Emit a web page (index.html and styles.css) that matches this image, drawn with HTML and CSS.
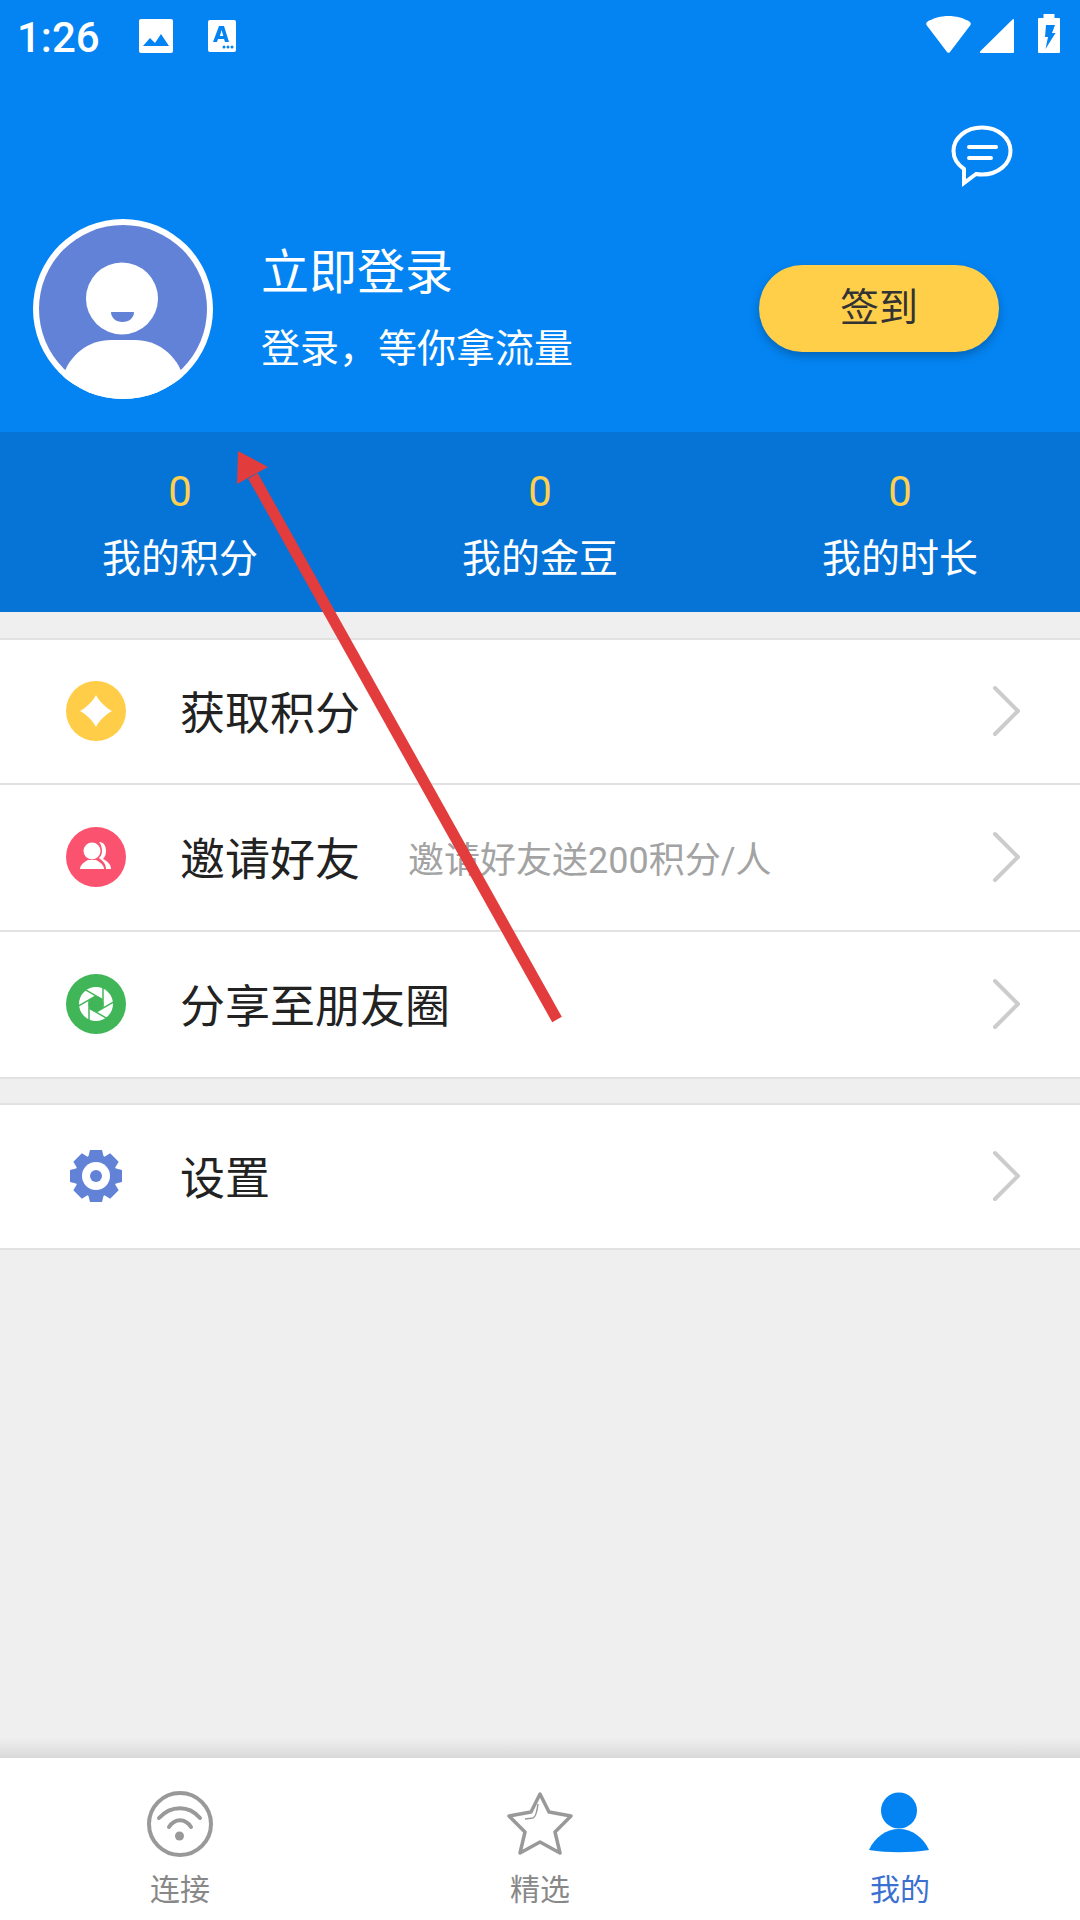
FILE: index.html
```html
<!DOCTYPE html>
<html lang="zh-CN">

<head>
  <meta charset="UTF-8">
  <meta name="viewport" content="width=device-width, initial-scale=1.0">
  <title>我的</title>
  <link rel="stylesheet" href="styles.css">
</head>

<body>
  <div class="app">
    <div class="profile-header">
      <div class="status-bar">
        <span class="status-time">1:26</span>
        <svg class="status-icon" width="36" height="36" viewBox="0 0 36 36">
          <path fill="#fff" d="M3 1h30a2 2 0 0 1 2 2v30a2 2 0 0 1-2 2H3a2 2 0 0 1-2-2V3a2 2 0 0 1 2-2z" />
          <path fill="#0484f2" d="M5 28l7-8 5 5 6-9 8 12z" />
        </svg>
        <svg class="status-icon" width="30" height="32" viewBox="0 0 30 32">
          <rect x="1" y="0" width="28" height="32" rx="2" fill="#fff" />
          <path fill="#0484f2" d="M12 6h5l5 16h-4l-1-3h-6l-1 3H6zm.9 10h3.400l-1.700-6z" />
          <circle cx="17" cy="27" r="1.500" fill="#0484f2" />
          <circle cx="21" cy="27" r="1.500" fill="#0484f2" />
          <circle cx="25" cy="27" r="1.500" fill="#0484f2" />
        </svg>
        <div class="status-right">
          <svg class="status-wifi" width="45" height="37" viewBox="0 0 45 37">
            <path fill="#fff" d="M1 6C7 2 15 0 22.500 0S38 2 44 6c1 1 1 2 .5 3L24 36a2 2 0 0 1-3 0L.5 9C0 8 0 7 1 6z" />
          </svg>
          <svg class="status-signal" width="34" height="34" viewBox="0 0 34 34">
            <path fill="#fff" d="M33 0a1 1 0 0 1 1 1v32a1 1 0 0 1-1 1H1a1 1 0 0 1-.7-1.700z" />
          </svg>
          <svg width="22" height="39" viewBox="0 0 22 39">
            <path fill="#fff" d="M5.500 0h11v4H21a1 1 0 0 1 1 1v33a1 1 0 0 1-1 1H1a1 1 0 0 1-1-1V5a1 1 0 0 1 1-1h4.500z" />
            <path fill="#0484f2" d="M8 11h9l-3 8h3.500L7.500 35l2.500-12H7z" />
          </svg>
        </div>
      </div>

      <div class="message-row">
        <svg width="62" height="62" viewBox="0 0 62 62" fill="none" stroke="#fff" stroke-width="4">
          <path d="M13 44C6 39 2.500 33 2.500 26 2.500 13 15 2.500 31 2.500S59.500 13 59.500 26 47 49.500 31 49.500c-2 0-4-.2-6-.5L13 58z" />
          <path d="M18 22h27M18 33h22" stroke-linecap="round" />
        </svg>
      </div>

      <div class="profile-row">
        <svg class="avatar" width="180" height="180" viewBox="0 0 180 180">
          <defs>
            <clipPath id="avatar-clip">
              <circle cx="90" cy="90" r="90" />
            </clipPath>
          </defs>
          <circle cx="90" cy="90" r="90" fill="#fff" />
          <circle cx="90" cy="90" r="84" fill="#6282d8" />
          <circle cx="89" cy="79.500" r="36" fill="#fff" />
          <path fill="#6282d8" d="M78 93h23c0 6-5 10-11.500 10S78 99 78 93z" />
          <path fill="#fff" clip-path="url(#avatar-clip)" d="M29 160c7-25 27-39 49-39h24c22 0 42 14 49 39v20H29z" />
        </svg>
        <div class="profile-text">
          <div class="profile-title">立即登录</div>
          <div class="profile-sub">登录，等你拿流量</div>
        </div>
        <div class="sign-btn">签到</div>
      </div>
    </div>

    <div class="stats">
      <div class="stat">
        <div class="stat-value">0</div>
        <div class="stat-label">我的积分</div>
      </div>
      <div class="stat">
        <div class="stat-value">0</div>
        <div class="stat-label">我的金豆</div>
      </div>
      <div class="stat">
        <div class="stat-value">0</div>
        <div class="stat-label">我的时长</div>
      </div>
    </div>

    <div class="menu-group menu-group-first">
      <div class="menu-row">
        <svg class="menu-icon" width="60" height="60" viewBox="0 0 60 60">
          <circle cx="30" cy="30" r="30" fill="#ffcd48" />
          <path fill="#fff" d="M30 14c3 6 9 12 16 16-7 4-13 10-16 16-3-6-9-12-16-16 7-4 13-10 16-16z" />
        </svg>
        <span class="menu-title">获取积分</span>
        <svg class="chevron" width="30" height="52" viewBox="0 0 30 52" fill="none" stroke="#ccc" stroke-width="4" stroke-linecap="round" stroke-linejoin="round">
          <path d="M3 3l23 23L3 49" />
        </svg>
      </div>
      <div class="menu-row">
        <svg class="menu-icon" width="60" height="60" viewBox="0 0 60 60">
          <circle cx="30" cy="30" r="30" fill="#fb5270" />
          <path fill="#fff" d="M33 15c5 0 7 4 7 9 0 3-1 6-3 8 4 2 8 5 8 10h-5c0-5-3-8-7-11 2-2 3-4 3-7 0-3-1-7-3-9z" />
          <circle cx="26" cy="24" r="8.500" fill="#fff" />
          <path fill="#fff" d="M14 42c0-4 4-7 8-9h8c4 2 8 5 8 9z" />
        </svg>
        <span class="menu-title">邀请好友</span>
        <span class="menu-note">邀请好友送200积分/人</span>
        <svg class="chevron" width="30" height="52" viewBox="0 0 30 52" fill="none" stroke="#ccc" stroke-width="4" stroke-linecap="round" stroke-linejoin="round">
          <path d="M3 3l23 23L3 49" />
        </svg>
      </div>
      <div class="menu-row">
        <svg class="menu-icon" width="60" height="60" viewBox="0 0 60 60">
          <circle cx="30" cy="30" r="30" fill="#41b658" />
          <circle cx="30" cy="30" r="17" fill="#fff" />
          <circle cx="30" cy="30" r="7.500" fill="#41b658" />
          <g stroke="#41b658" stroke-width="1.500">
            <path d="M37 34V13" />
            <path d="M37 34V13" transform="rotate(60 30 30)" />
            <path d="M37 34V13" transform="rotate(120 30 30)" />
            <path d="M37 34V13" transform="rotate(180 30 30)" />
            <path d="M37 34V13" transform="rotate(240 30 30)" />
            <path d="M37 34V13" transform="rotate(300 30 30)" />
          </g>
        </svg>
        <span class="menu-title">分享至朋友圈</span>
        <svg class="chevron" width="30" height="52" viewBox="0 0 30 52" fill="none" stroke="#ccc" stroke-width="4" stroke-linecap="round" stroke-linejoin="round">
          <path d="M3 3l23 23L3 49" />
        </svg>
      </div>
    </div>

    <div class="menu-group">
      <div class="menu-row">
        <svg class="menu-icon" width="60" height="60" viewBox="0 0 60 60" fill="#6282d8">
          <defs>
            <path id="gear-tooth" d="M24 4h12l2.500 10h-17z" />
          </defs>
          <circle cx="30" cy="30" r="21" />
          <use href="#gear-tooth" />
          <use href="#gear-tooth" transform="rotate(45 30 30)" />
          <use href="#gear-tooth" transform="rotate(90 30 30)" />
          <use href="#gear-tooth" transform="rotate(135 30 30)" />
          <use href="#gear-tooth" transform="rotate(180 30 30)" />
          <use href="#gear-tooth" transform="rotate(225 30 30)" />
          <use href="#gear-tooth" transform="rotate(270 30 30)" />
          <use href="#gear-tooth" transform="rotate(315 30 30)" />
          <circle cx="30" cy="30" r="14" fill="#fff" />
          <circle cx="30" cy="30" r="6" />
        </svg>
        <span class="menu-title">设置</span>
        <svg class="chevron" width="30" height="52" viewBox="0 0 30 52" fill="none" stroke="#ccc" stroke-width="4" stroke-linecap="round" stroke-linejoin="round">
          <path d="M3 3l23 23L3 49" />
        </svg>
      </div>
    </div>

    <div class="spacer"></div>

    <div class="tab-bar">
      <div class="tab">
        <svg width="66" height="66" viewBox="0 0 66 66" fill="none" stroke="#999" stroke-width="4" stroke-linecap="round">
          <circle cx="33" cy="33" r="31" />
          <path d="M12 27c12-13 30-13 41 0M22 36c6-9 16-9 22 0" />
          <circle cx="32.500" cy="45" r="4.500" fill="#999" stroke="none" />
        </svg>
        <span class="tab-label">连接</span>
      </div>
      <div class="tab">
        <svg width="66" height="66" viewBox="0 0 66 66" fill="none" stroke="#999" stroke-width="3.500" stroke-linejoin="round">
          <path d="M33 3l9 18 22 4-16 16 5 21-20-11-20 11 5-21L2 25l22-4z" />
          <path stroke-width="1.500" d="M18 28l8-1c3-1 4-6 5-14" />
        </svg>
        <span class="tab-label">精选</span>
      </div>
      <div class="tab tab-active">
        <svg width="62" height="66" viewBox="0 0 62 66" fill="#0484f2">
          <circle cx="30" cy="19.500" r="18" />
          <path d="M0 59c6-13 17-21 30-21s24 8 30 21c-20 3-40 3-60 0z" />
        </svg>
        <span class="tab-label">我的</span>
      </div>
    </div>

    <svg class="annotation" width="1080" height="1920" viewBox="0 0 1080 1920">
      <path d="M557 1019.500L253 476" stroke="#e33c3c" stroke-width="11" fill="none" />
      <path fill="#e33c3c" d="M238 451l30 16-31 17z" />
    </svg>
  </div>
</body>

</html>
```

FILE: styles.css
```css
* {
  box-sizing: border-box;
}

body {
  margin: 0;
  font-family: "Noto Sans CJK SC", "Noto Sans", sans-serif;
  background: #efefef;
}

.app {
  position: relative;
  display: flex;
  flex-direction: column;
  width: 1080px;
  height: 1920px;
  overflow: hidden;
}

.profile-header {
  height: 432px;
  background: #0484f2;
  color: #fff;
}

.status-bar {
  display: flex;
  align-items: center;
  height: 72px;
  padding: 0 20px 0 17px;
}

.status-time {
  padding-top: 2px;
  font-family: Roboto, sans-serif;
  font-size: 42px;
  font-weight: 500;
  margin-right: 38px;
}

.status-icon {
  margin-right: 33px;
}

.status-right {
  display: flex;
  align-items: flex-end;
  align-self: flex-start;
  padding-top: 14px;
  margin-left: auto;
}

.status-wifi {
  margin-right: 9px;
}

.status-signal {
  margin-right: 24px;
}

.message-row {
  display: flex;
  justify-content: flex-end;
  height: 147px;
  padding: 53px 67px 0 0;
}

.profile-row {
  display: flex;
  align-items: center;
  padding-left: 33px;
}

.avatar {
  flex-shrink: 0;
}

.profile-text {
  flex: 1;
  margin-left: 48px;
  padding-bottom: 11px;
}

.profile-title {
  font-size: 48px;
  line-height: 66px;
}

.profile-sub {
  margin-top: 17px;
  font-size: 39px;
  line-height: 54px;
}

.sign-btn {
  width: 240px;
  height: 87px;
  margin-right: 81px;
  margin-bottom: 1px;
  border-radius: 44px;
  background: #ffcf4a;
  box-shadow: 0 4px 10px rgba(0, 0, 0, 0.25);
  color: #333;
  font-size: 39px;
  line-height: 78px;
  text-align: center;
}

.stats {
  display: flex;
  height: 180px;
  background: #0574d6;
}

.stat {
  flex: 1;
  padding-top: 32px;
  text-align: center;
}

.stat-value {
  font-family: Roboto, sans-serif;
  font-size: 42px;
  line-height: 56px;
  color: #ffd04f;
}

.stat-label {
  margin-top: 4px;
  font-size: 39px;
  line-height: 62px;
  color: #fff;
}

.menu-group {
  margin-top: 24px;
  background: #fff;
  border-top: 2px solid #e2e2e2;
}

.menu-group-first {
  margin-top: 26px;
}

.menu-row {
  display: flex;
  align-items: center;
  height: 147px;
  padding: 0 0 2px 66px;
  border-bottom: 2px solid #e2e2e2;
}

.menu-row:first-child {
  height: 145px;
}

.menu-icon {
  flex-shrink: 0;
}

.menu-title {
  margin-left: 54px;
  font-size: 45px;
  color: #222;
}

.menu-note {
  margin-left: 48px;
  font-family: Roboto, "Noto Sans CJK SC", sans-serif;
  font-size: 36px;
  color: #a3a3a3;
}

.chevron {
  margin-left: auto;
  margin-right: 58px;
}

.spacer {
  flex: 1;
  background: linear-gradient(to bottom, #efefef, #d9d9d9) bottom / 100% 20px no-repeat;
}

.tab-bar {
  display: flex;
  height: 162px;
  background: #fff;
}

.tab {
  flex: 1;
  display: flex;
  flex-direction: column;
  align-items: center;
  padding-top: 33px;
  color: #888;
}

.tab-label {
  margin-top: 9px;
  font-size: 30px;
  line-height: 42px;
}

.tab-active {
  color: #3a70d0;
}

.annotation {
  position: absolute;
  top: 0;
  left: 0;
  pointer-events: none;
}
```
